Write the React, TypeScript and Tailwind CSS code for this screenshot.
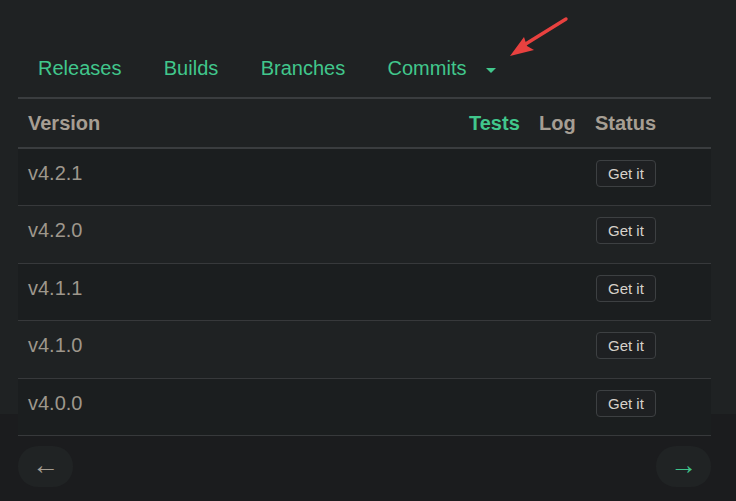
import React from 'react';

const tabs = ['Releases', 'Builds', 'Branches', 'Commits'];

const versions = ['v4.2.1', 'v4.2.0', 'v4.1.1', 'v4.1.0', 'v4.0.0'];

const font = { fontFamily: '"Liberation Sans", Arial, sans-serif' };

function RedArrow() {
  return (
    <svg
      className="absolute left-0 top-0 pointer-events-none"
      width="736"
      height="120"
      viewBox="0 0 736 120"
    >
      <line x1="566" y1="19" x2="524" y2="45" stroke="#e8413f" strokeWidth="3.4" strokeLinecap="round" />
      <polygon points="510,56 524,37 527,46 534,50" fill="#e8413f" />
    </svg>
  );
}

export default function App() {
  return (
    <div className="relative min-h-screen bg-[#1b1c1e] text-[#9e978c]" style={font}>
      <div className="h-[414px] bg-[#1f2223] pt-[56px]">
        <nav className="flex h-[24px] items-center gap-[42.4px] pl-[38px]">
          {tabs.map((t) => (
            <a key={t} className="text-[20px] leading-[24px] text-[#41c78c]">
              {t}
            </a>
          ))}
          <span className="-ml-[22.4px] mt-[5px] h-0 w-0 border-x-[5px] border-t-[5px] border-x-transparent border-t-[#41c78c]" />
        </nav>

        <div className="ml-[18px] mr-[25px] mt-[17px]">
          <div className="flex h-[52px] items-center border-y-2 border-[#3a3d3f] pb-[1px] text-[20px] font-bold text-[#a69e93]">
            <div className="flex-1 pl-[10px]">Version</div>
            <div className="w-[70px] pl-[10px] text-[#41c78c]">Tests</div>
            <div className="w-[56px] pl-[10px]">Log</div>
            <div className="w-[126px] pl-[10px]">Status</div>
          </div>

          {versions.map((v, i) => (
            <div
              key={v}
              className={`flex h-[57.4px] items-start border-b border-[#37393b] pt-[9px] ${
                i % 2 === 0 ? 'bg-[#1b1e1f]' : 'bg-[#1f2223]'
              }`}
            >
              <div className="flex-1 pl-[10px] text-[20px] leading-[30px]">{v}</div>
              <div className="w-[70px]" />
              <div className="w-[56px]" />
              <div className="w-[126px] pl-[11px] pt-[2px]">
                <button className="h-[27px] rounded-[4px] border border-[#3d4042] bg-[#1e2022] px-[11px] text-[15px] leading-[25px] text-[#d6d1ca]">
                  Get it
                </button>
              </div>
            </div>
          ))}
        </div>
      </div>

      <div className="flex justify-between pl-[18px] pr-[25px] pt-[32px]">
        <button className="flex h-[41px] w-[55px] items-center justify-center rounded-[20px] bg-[#202324] pb-[2px] text-[27px] text-[#a39b90]">
          ←
        </button>
        <button className="flex h-[41px] w-[55px] items-center justify-center rounded-[20px] bg-[#202324] pb-[2px] text-[27px] text-[#3fc28a]">
          →
        </button>
      </div>

      <RedArrow />
    </div>
  );
}
